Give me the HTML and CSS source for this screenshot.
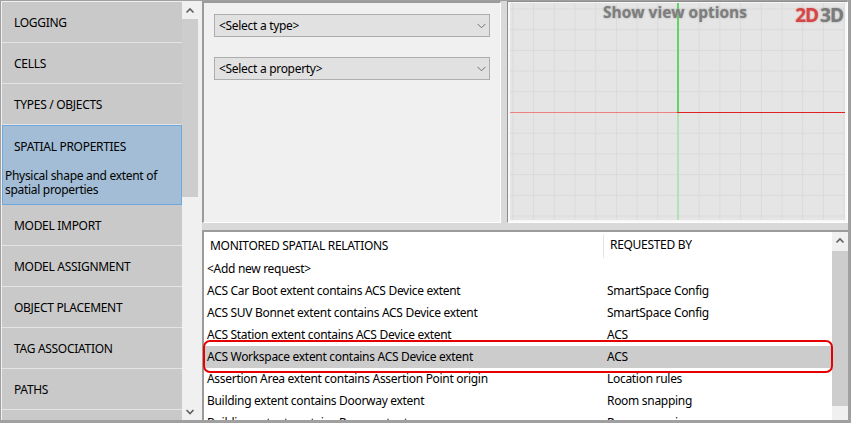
FILE: index.html
```html
<!DOCTYPE html>
<html>
<head>
    <meta charset="utf-8">
    <title>Spatial properties</title>
    <link rel="stylesheet" href="styles.css">
</head>

<body>
<div class="window">
    <div class="sidebar">
        <div class="nav">
            <div class="nav_item">LOGGING</div>
            <div class="nav_item">CELLS</div>
            <div class="nav_item">TYPES / OBJECTS</div>
            <div class="nav_item selected">
                <div class="nav_title">SPATIAL PROPERTIES</div>
                <div class="nav_desc">Physical shape and extent of spatial properties</div>
            </div>
            <div class="nav_item">MODEL IMPORT</div>
            <div class="nav_item">MODEL ASSIGNMENT</div>
            <div class="nav_item">OBJECT PLACEMENT</div>
            <div class="nav_item">TAG ASSOCIATION</div>
            <div class="nav_item">PATHS</div>
            <div class="nav_item"></div>
        </div>
        <div class="vscroll">
            <div class="arrow"><svg width="16" height="17"><polyline points="4.5,10.5 8,7 11.5,10.5" fill="none" stroke="#606060" stroke-width="1.6"/></svg></div>
            <div class="thumb nav_thumb"></div>
            <div class="track"></div>
            <div class="arrow"><svg width="16" height="17"><polyline points="4.5,7 8,10.5 11.5,7" fill="none" stroke="#606060" stroke-width="1.6"/></svg></div>
        </div>
    </div>

    <div class="main">
        <div class="top">
            <div class="config">
                <div class="combo">
                    <span>&lt;Select a type&gt;</span>
                    <svg width="9" height="6"><polyline points="0.5,0.8 4.5,4.8 8.5,0.8" fill="none" stroke="#707070" stroke-width="1"/></svg>
                </div>
                <div class="combo">
                    <span>&lt;Select a property&gt;</span>
                    <svg width="9" height="6"><polyline points="0.5,0.8 4.5,4.8 8.5,0.8" fill="none" stroke="#707070" stroke-width="1"/></svg>
                </div>
            </div>
            <div class="viewport">
                <div class="canvas">
                    <svg width="335" height="217">
                        <defs>
                            <pattern id="grid" x="2.4" y="5.5" width="20.7" height="20.7" patternUnits="userSpaceOnUse">
                                <path d="M0 0.5 H20.7 M0.5 0 V20.7" stroke="#dadada" stroke-width="1" fill="none"/>
                            </pattern>
                        </defs>
                        <rect width="335" height="217" fill="#e5e5e5"/>
                        <rect width="335" height="217" fill="url(#grid)"/>
                        <rect x="167" y="0" width="2" height="109" fill="#63d463"/>
                        <rect x="167" y="110" width="2" height="107" fill="#b3e3b3"/>
                        <rect x="0" y="109" width="167" height="1" fill="#ee8080"/>
                        <rect x="167" y="109" width="168" height="1" fill="#e02424"/>
                    </svg>
                    <div class="view_options">Show view options</div>
                    <div class="view_mode"><span class="mode_2d">2D</span><span class="mode_3d">3D</span></div>
                </div>
            </div>
        </div>

        <div class="list_panel">
            <div class="list">
                <div class="list_header">
                    <div class="col1">MONITORED SPATIAL RELATIONS</div>
                    <div class="col2">REQUESTED BY</div>
                </div>
                <div class="row"><div class="col1">&lt;Add new request&gt;</div><div class="col2"></div></div>
                <div class="row"><div class="col1">ACS Car Boot extent contains ACS Device extent</div><div class="col2">SmartSpace Config</div></div>
                <div class="row"><div class="col1">ACS SUV Bonnet extent contains ACS Device extent</div><div class="col2">SmartSpace Config</div></div>
                <div class="row"><div class="col1">ACS Station extent contains ACS Device extent</div><div class="col2">ACS</div></div>
                <div class="row active"><div class="col1">ACS Workspace extent contains ACS Device extent</div><div class="col2">ACS</div></div>
                <div class="row"><div class="col1">Assertion Area extent contains Assertion Point origin</div><div class="col2">Location rules</div></div>
                <div class="row"><div class="col1">Building extent contains Doorway extent</div><div class="col2">Room snapping</div></div>
                <div class="row"><div class="col1">Building extent contains Room extent</div><div class="col2">Room snapping</div></div>
            </div>
            <div class="vscroll">
                <div class="arrow"><svg width="16" height="17"><polyline points="4.5,10.5 8,7 11.5,10.5" fill="none" stroke="#606060" stroke-width="1.6"/></svg></div>
                <div class="thumb list_thumb"></div>
                <div class="track"></div>
                <div class="arrow"><svg width="16" height="17"><polyline points="4.5,7 8,10.5 11.5,7" fill="none" stroke="#606060" stroke-width="1.6"/></svg></div>
            </div>
            <div class="highlight"></div>
        </div>
    </div>
</div>
</body>
</html>
```

FILE: styles.css
```css
body {
    margin: 0;
    background-color: #f0f0f0;
    font-family: "Noto Sans", "Open Sans", sans-serif;
    font-size: 12px;
    letter-spacing: -0.3px;
    color: #000000;
}

div.window {
    display: flex;
    width: 851px;
    height: 423px;
    box-sizing: border-box;
    border: 1px solid #a0a0a0;
    border-right-width: 3px;
    border-bottom-width: 3px;
    background-color: #d9d9d9;
    overflow: hidden;
}

/* left navigation */

div.sidebar {
    display: flex;
    width: 201px;
    padding: 1px 4px 0 1px;
    box-sizing: border-box;
    background-color: #f0f0f0;
}

div.nav {
    width: 180px;
    overflow: hidden;
}

div.nav_item {
    height: 40px;
    line-height: 42px;
    padding-left: 12px;
    background-color: #c9c9c9;
    border-bottom: 1px solid #e4e4e4;
    white-space: nowrap;
}

div.nav_item.selected {
    height: 80px;
    box-sizing: border-box;
    padding-left: 0;
    line-height: normal;
    background-color: #a2bdd5;
    border: 1px solid #6ea8dc;
}

div.nav_title {
    height: 39px;
    line-height: 41px;
    padding-left: 11px;
}

div.nav_desc {
    padding: 4px 0 0 2px;
    line-height: 14px;
    white-space: normal;
    width: 172px;
}

div.vscroll {
    display: flex;
    flex-direction: column;
    width: 16px;
    flex-shrink: 0;
    background-color: #f0f0f0;
}

div.vscroll .arrow {
    height: 17px;
}

div.vscroll svg {
    display: block;
}

div.vscroll .thumb {
    background-color: #cdcdcd;
}

div.vscroll .track {
    flex: 1;
}

.nav_thumb {
    height: 178px;
}

.list_thumb {
    height: 155px;
    margin-top: 2px;
}

/* right side */

div.main {
    flex: 1;
    display: flex;
    flex-direction: column;
    gap: 7px;
}

div.top {
    display: flex;
    height: 222px;
    gap: 6px;
}

div.config {
    width: 299px;
    box-sizing: border-box;
    padding: 11px 0 0 10px;
    background-color: #f0f0f0;
    border-left: 2px solid #9b9b9b;
    border-top: 2px solid #9b9b9b;
    border-right: 1px solid #ffffff;
    border-bottom: 1px solid #ffffff;
}

div.combo {
    display: flex;
    justify-content: space-between;
    align-items: center;
    width: 276px;
    height: 23px;
    box-sizing: border-box;
    padding: 0 3px 0 4px;
    margin-bottom: 20px;
    background-color: #e1e1e1;
    border: 1px solid #adadad;
}

div.combo span {
    margin-top: -1px;
}

div.viewport {
    flex: 1;
    box-sizing: border-box;
    padding: 1px 2px 2px 2px;
    background-color: #f7f7f7;
    border-left: 1px solid #8c8c8c;
    border-top: 1px solid #8c8c8c;
    border-right: 1px solid #ffffff;
    border-bottom: 1px solid #ffffff;
}

div.canvas {
    position: relative;
    height: 100%;
}

div.canvas svg {
    display: block;
}

div.view_options {
    position: absolute;
    top: 0;
    left: 93px;
    font-family: "Open Sans", sans-serif;
    font-weight: bold;
    font-size: 15.5px;
    line-height: 18px;
    letter-spacing: 0;
    color: #7e7e7e;
    text-shadow: 0 0 2px #a0a0a0;
}

div.view_mode {
    position: absolute;
    top: 1px;
    right: 2px;
    font-family: "Open Sans", sans-serif;
    font-weight: bold;
    font-size: 19px;
    line-height: 22px;
    letter-spacing: -1px;
}

.mode_2d {
    color: #d24848;
    text-shadow: 0 0 2px #dd8888;
    margin-right: 2px;
}

.mode_3d {
    color: #7b7b7b;
    text-shadow: 0 0 2px #999999;
}

/* relations list */

div.list_panel {
    position: relative;
    flex: 1;
    display: flex;
    background-color: #ffffff;
    border-left: 2px solid #9b9b9b;
    border-top: 2px solid #9b9b9b;
}

div.list {
    flex: 1;
    overflow: hidden;
}

div.list_header {
    display: flex;
    height: 26px;
    line-height: 26px;
}

div.list_header .col1 {
    width: 400px;
    box-sizing: border-box;
    padding-left: 6px;
    border-right: 1px solid #e5e5e5;
    margin: 2px 0 0 0;
    line-height: 23px;
}

div.list_header .col2 {
    padding-left: 6px;
    line-height: 26px;
}

div.row {
    display: flex;
    height: 22px;
    line-height: 22px;
    white-space: nowrap;
}

div.row .col1 {
    width: 400px;
    padding-left: 3px;
    box-sizing: border-box;
}

div.row .col2 {
    padding-left: 3px;
}

div.row.active {
    background-color: #cccccc;
}

div.highlight {
    position: absolute;
    left: -1px;
    top: 108px;
    width: 630px;
    height: 33px;
    box-sizing: border-box;
    border: 2px solid #e60000;
    border-radius: 7px;
}
```
